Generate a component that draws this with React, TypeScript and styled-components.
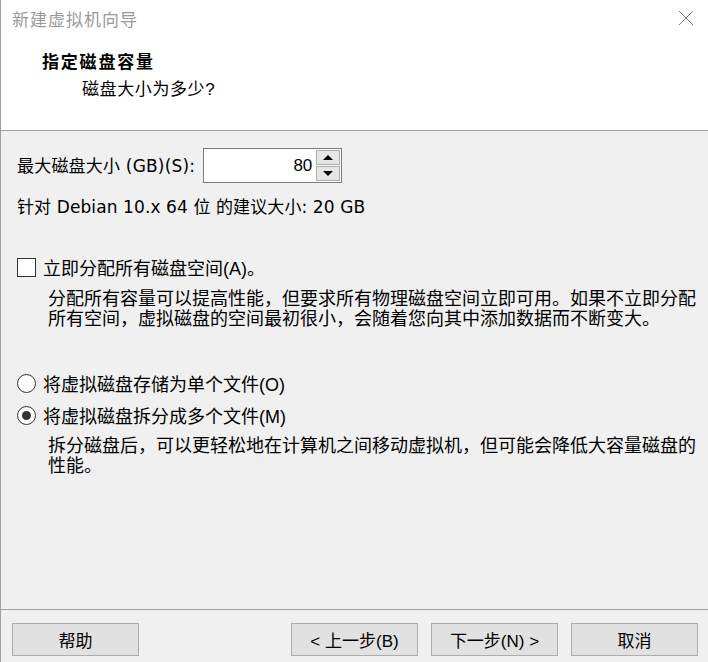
import * as React from "react";
import styled, { createGlobalStyle } from "styled-components";

const GlobalStyle = createGlobalStyle`
  html, body {
    margin: 0;
    padding: 0;
    background: #f0f0f0;
  }
  * {
    box-sizing: border-box;
  }
`;

const CJK = `"Liberation Sans", "Noto Sans CJK SC", sans-serif`;
const UI = `"DejaVu Sans", "Noto Sans CJK SC", sans-serif`;

const Window = styled.div`
  width: 708px;
  height: 662px;
  display: flex;
  flex-direction: column;
  border-left: 1px solid #a0a0a0;
  background: #f0f0f0;
  font-family: ${CJK};
  color: #000;
  overflow: hidden;
`;

const Header = styled.header`
  height: 131px;
  background: #fff;
  border-bottom: 1px solid #a0a0a0;
  display: flex;
  flex-direction: column;
`;

const TitleBar = styled.div`
  height: 36px;
  display: flex;
  align-items: center;
  justify-content: space-between;
  padding: 0 14px 0 11px;
`;

const Title = styled.span`
  font-size: 17px;
  letter-spacing: 1px;
  color: #9a9a9a;
`;

const CloseButton = styled.button`
  width: 16px;
  height: 16px;
  padding: 0;
  border: none;
  background: transparent;
  display: flex;
  margin-top: -1px;
`;

const Heading = styled.h1`
  margin: 16px 0 0 41px;
  font-size: 17px;
  font-weight: 700;
  letter-spacing: 1.8px;
  line-height: 22px;
`;

const SubHeading = styled.p`
  margin: 5px 0 0 81px;
  font-size: 17px;
  letter-spacing: 0.6px;
  line-height: 22px;
`;

const Body = styled.main`
  flex: 1;
  padding: 17px 0 0 16px;
  display: flex;
  flex-direction: column;
`;

const SizeRow = styled.div`
  display: flex;
  align-items: center;
  gap: 8px;
  height: 35px;
`;

const Label = styled.span`
  font-family: ${UI};
  font-size: 17px;
  letter-spacing: 0.2px;
  line-height: 24px;
`;

const SpinBox = styled.div`
  width: 139px;
  height: 35px;
  display: flex;
  background: #fff;
  border: 1px solid #7a7a7a;
`;

const SpinValue = styled.div`
  flex: 1;
  text-align: right;
  font-size: 17px;
  line-height: 33px;
  padding-right: 4px;
`;

const SpinButtons = styled.div`
  width: 25px;
  display: flex;
  flex-direction: column;
  gap: 1px;
  padding: 1px 1px 1px 0;
`;

const SpinButton = styled.div`
  flex: 1;
  background: #e5e5e5;
  border: 1px solid #acacac;
  display: flex;
  align-items: center;
  justify-content: center;
`;

const Arrow = styled.span<{ $up?: boolean }>`
  width: 0;
  height: 0;
  border-left: 5px solid transparent;
  border-right: 5px solid transparent;
  ${(p) => (p.$up ? "border-bottom: 5px solid #000;" : "border-top: 5px solid #000;")}
`;

const Recommend = styled.div`
  margin-top: 12px;
  font-family: ${UI};
  font-size: 17px;
  letter-spacing: 0.1px;
  line-height: 24px;
`;

const OptionRow = styled.label<{ $gap: number }>`
  display: flex;
  align-items: center;
  gap: 7px;
  height: 24px;
  margin-top: ${(p) => p.$gap}px;
  font-size: 18px;
`;

const CheckBox = styled.span`
  width: 19px;
  height: 19px;
  background: #fff;
  border: 1px solid #333;
  flex-shrink: 0;
`;

const Radio = styled.span<{ $checked?: boolean }>`
  width: 19px;
  height: 19px;
  border-radius: 50%;
  background: #fff;
  border: 1px solid #333;
  flex-shrink: 0;
  display: flex;
  align-items: center;
  justify-content: center;
  &::after {
    content: "";
    width: 9px;
    height: 9px;
    border-radius: 50%;
    background: ${(p) => (p.$checked ? "#333" : "transparent")};
  }
`;

const Description = styled.p<{ $gap: number }>`
  margin: ${(p) => p.$gap}px 0 0 31px;
  width: 656px;
  font-size: 18px;
  line-height: 20px;
`;

const Footer = styled.footer`
  height: 53px;
  border-top: 1px solid #a0a0a0;
  display: flex;
  padding: 13px 10px 0 11px;
  gap: 13px;
`;

const Spacer = styled.div`
  flex: 1;
`;

const Button = styled.button`
  width: 127px;
  height: 33px;
  background: #e1e1e1;
  border: 1px solid #adadad;
  font-family: ${CJK};
  font-size: 17px;
  color: #000;
  padding: 0;
`;

const App: React.FC = () => {
  return (
    <>
      <GlobalStyle />
      <Window>
        <Header>
          <TitleBar>
            <Title>新建虚拟机向导</Title>
            <CloseButton aria-label="关闭">
              <svg width="16" height="16" viewBox="0 0 16 16">
                <path d="M1 1 L15 15 M15 1 L1 15" stroke="#7a7a7a" strokeWidth="1" fill="none" />
              </svg>
            </CloseButton>
          </TitleBar>
          <Heading>指定磁盘容量</Heading>
          <SubHeading>磁盘大小为多少?</SubHeading>
        </Header>
        <Body>
          <SizeRow>
            <Label>最大磁盘大小 (GB)(S):</Label>
            <SpinBox>
              <SpinValue>80</SpinValue>
              <SpinButtons>
                <SpinButton>
                  <Arrow $up />
                </SpinButton>
                <SpinButton>
                  <Arrow />
                </SpinButton>
              </SpinButtons>
            </SpinBox>
          </SizeRow>
          <Recommend>针对 Debian 10.x 64 位 的建议大小: 20 GB</Recommend>
          <OptionRow $gap={36}>
            <CheckBox />
            立即分配所有磁盘空间(A)。
          </OptionRow>
          <Description $gap={10}>
            分配所有容量可以提高性能，但要求所有物理磁盘空间立即可用。如果不立即分配所有空间，虚拟磁盘的空间最初很小，会随着您向其中添加数据而不断变大。
          </Description>
          <OptionRow $gap={42}>
            <Radio />
            将虚拟磁盘存储为单个文件(O)
          </OptionRow>
          <OptionRow $gap={8}>
            <Radio $checked />
            将虚拟磁盘拆分成多个文件(M)
          </OptionRow>
          <Description $gap={9}>
            拆分磁盘后，可以更轻松地在计算机之间移动虚拟机，但可能会降低大容量磁盘的性能。
          </Description>
        </Body>
        <Footer>
          <Button>帮助</Button>
          <Spacer />
          <Button>&lt; 上一步(B)</Button>
          <Button>下一步(N) &gt;</Button>
          <Button>取消</Button>
        </Footer>
      </Window>
    </>
  );
};

export default App;
